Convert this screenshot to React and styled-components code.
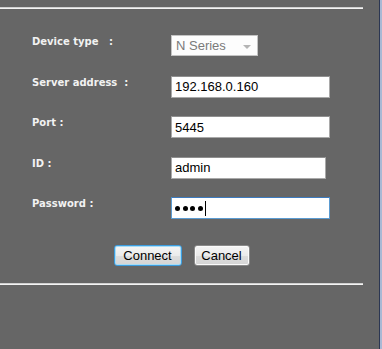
import React from 'react';
import styled, { createGlobalStyle } from 'styled-components';

const GlobalStyle = createGlobalStyle`
  html, body {
    margin: 0;
    padding: 0;
    background: #666666;
  }
`;

const fields = [
  { label: 'Device type\u00a0\u00a0\u00a0:', kind: 'select', value: 'N Series', width: 87 },
  { label: 'Server address\u00a0\u00a0:', kind: 'text', value: '192.168.0.160', width: 159 },
  { label: 'Port :', kind: 'text', value: '5445', width: 159 },
  { label: 'ID :', kind: 'text', value: 'admin', width: 155 },
  { label: 'Password :', kind: 'password', value: '1234', width: 159 },
];

const ConnectDialog = () => {
  return (
    <Page>
      <GlobalStyle />
      <Main>
        <Rule />
        <Form>
          {fields.map((f) => (
            <Row key={f.label}>
              <Label>{f.label}</Label>
              {f.kind === 'select' && (
                <SelectBox $width={f.width}>
                  <span>{f.value}</span>
                  <Arrow />
                </SelectBox>
              )}
              {f.kind === 'text' && (
                <TextBox $width={f.width}>{f.value}</TextBox>
              )}
              {f.kind === 'password' && (
                <TextBox $width={f.width} $focused>
                  {f.value.split('').map((_, i) => (
                    <Dot key={i} />
                  ))}
                  <Caret />
                </TextBox>
              )}
            </Row>
          ))}
        </Form>
        <Actions>
          <Button type='button' $primary $width={68}>
            Connect
          </Button>
          <Button type='button' $width={56}>
            Cancel
          </Button>
        </Actions>
        <Rule />
      </Main>
      <Edge />
    </Page>
  );
};

const Page = styled.div`
  display: flex;
  width: 382px;
  height: 349px;
  background: #666666;
  overflow: hidden;
`;

const Main = styled.div`
  width: 379px;
  padding-top: 7px;
`;

const Edge = styled.div`
  width: 2px;
  border-left: 1px solid #2b3652;
  background: #a9b8d4;
`;

const Rule = styled.div`
  width: 363px;
  height: 1px;
  border-top: 1px solid #d0d0d0;
  background: #f4f4f4;
`;

const Form = styled.div`
  display: flex;
  flex-direction: column;
  gap: 18.5px;
  margin-top: 26px;
  padding-left: 32px;
`;

const Row = styled.div`
  display: grid;
  grid-template-columns: 139px auto;
  align-items: start;
  height: 22px;
`;

const Label = styled.div`
  padding-top: 1px;
  font-family: 'DejaVu Sans', Verdana, sans-serif;
  font-weight: bold;
  font-size: 10px;
  line-height: 12px;
  color: #f2f2f2;
  white-space: pre;
`;

const TextBox = styled.div`
  box-sizing: border-box;
  display: flex;
  align-items: center;
  width: ${(p) => p.$width}px;
  height: 22px;
  padding: 0 3px;
  background: #ffffff;
  border: 1px solid ${(p) => (p.$focused ? '#5b9bd1' : '#a9a9a9')};
  border-top-color: ${(p) => (p.$focused ? '#3d7bbf' : '#8f8f8f')};
  font-family: 'Liberation Sans', Arial, sans-serif;
  font-size: 13px;
  color: #000000;
`;

const SelectBox = styled.div`
  box-sizing: border-box;
  display: flex;
  align-items: center;
  justify-content: space-between;
  width: ${(p) => p.$width}px;
  height: 21px;
  padding: 0 6px 0 4px;
  background: #fdfdfd;
  border: 1px solid #c4c4c4;
  font-family: 'Liberation Sans', Arial, sans-serif;
  font-size: 13px;
  color: #7a7a7a;
`;

const Arrow = styled.span`
  width: 0;
  height: 0;
  margin-top: 2px;
  border-left: 4px solid transparent;
  border-right: 4px solid transparent;
  border-top: 4px solid #b5b5b5;
`;

const Dot = styled.span`
  width: 5px;
  height: 5px;
  margin-right: 2.5px;
  border-radius: 50%;
  background: #000000;
`;

const Caret = styled.span`
  width: 1px;
  height: 15px;
  background: #000000;
`;

const Actions = styled.div`
  display: flex;
  justify-content: center;
  gap: 12px;
  width: 363px;
  margin: 26px 0 17px;
`;

const Button = styled.button`
  box-sizing: border-box;
  width: ${(p) => p.$width}px;
  height: 21px;
  padding: 0;
  border: 1px solid ${(p) => (p.$primary ? '#3c9de0' : '#8a8a8a')};
  border-radius: 3px;
  background: linear-gradient(#f5f5f5 0%, #ebebeb 50%, #dddddd 51%, #d5d5d5 100%);
  box-shadow: inset 0 0 0 1px ${(p) => (p.$primary ? '#a8dcf5' : '#fbfbfb')};
  font-family: 'Liberation Sans', Arial, sans-serif;
  font-size: 13px;
  line-height: 16px;
  color: #000000;
`;

export default ConnectDialog;
